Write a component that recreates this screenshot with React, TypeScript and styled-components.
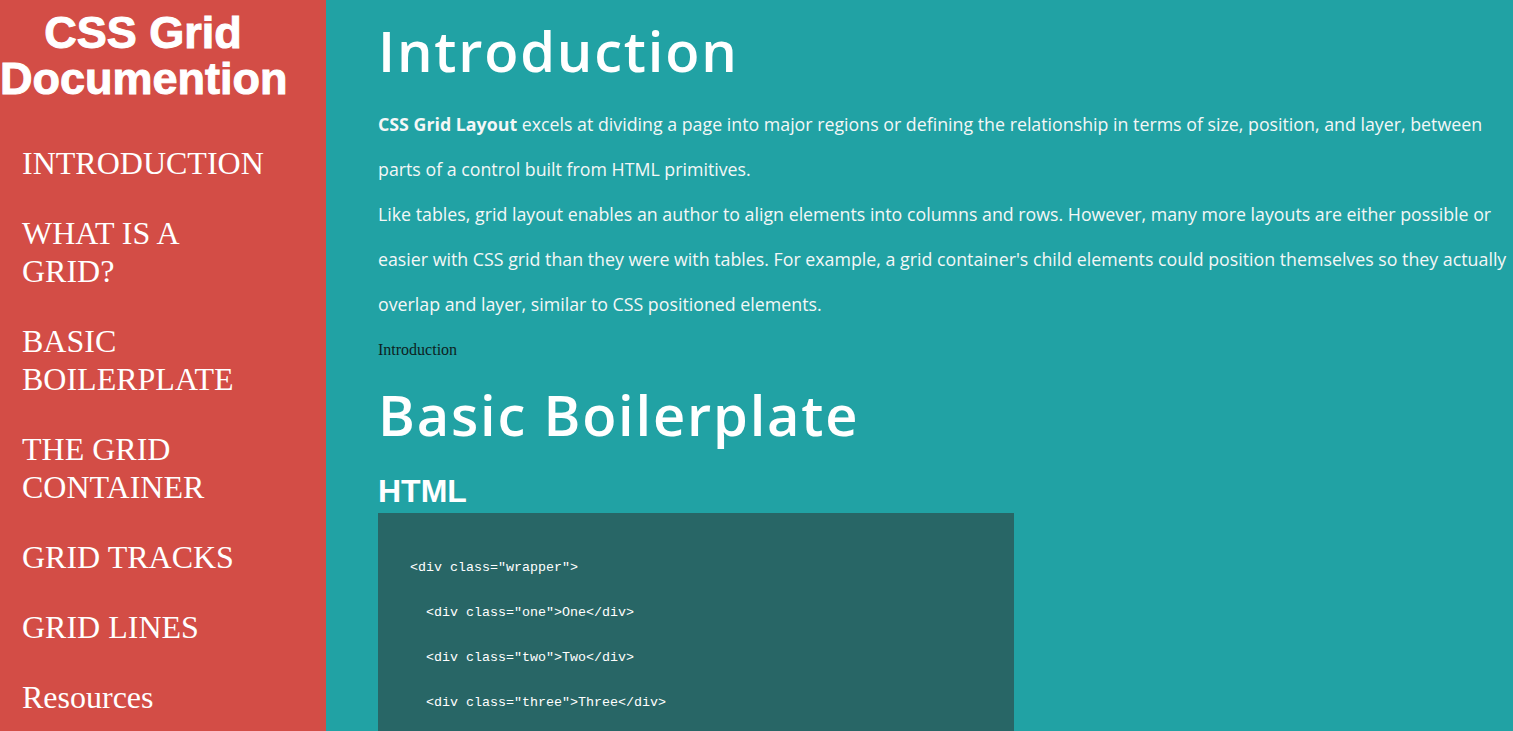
import React from "react";
import styled, { createGlobalStyle } from "styled-components";

const Global = createGlobalStyle`
  html, body { margin: 0; padding: 0; }
  body { font-family: "Liberation Serif", "Times New Roman", serif; overflow: hidden; }
`;

const Page = styled.div`
  display: grid;
  grid-template-columns: 326px 1fr;
  height: 100vh;
  overflow: hidden;
  background: #21a2a4;
`;

const Sidebar = styled.nav`
  background: #d34d46;
  height: 100vh;
  overflow: hidden;
`;

const Title = styled.header`
  width: 286px;
  margin: 10px 0 0;
  text-align: center;
  font-family: "Liberation Sans", Arial, sans-serif;
  font-weight: 700;
  font-size: 45px;
  line-height: 46px;
  color: #fff;
  -webkit-text-stroke: 1px #fff;
`;

const NavList = styled.ul`
  list-style: none;
  margin: 42px 0 0;
  padding: 0 0 0 22px;
  width: 250px;
  display: flex;
  flex-direction: column;
  gap: 32px;
`;

const NavItem = styled.li<{ $upper?: boolean }>`
  font-family: "Liberation Serif", "Times New Roman", serif;
  font-size: 32px;
  line-height: 38px;
  color: #fff;
  text-transform: ${(p) => (p.$upper ? "uppercase" : "none")};
`;

const Main = styled.main`
  padding: 0 0 0 52px;
  overflow: hidden;
`;

const Heading = styled.h1<{ $flush?: boolean }>`
  margin: ${(p) => (p.$flush ? "0" : "12px 0 14px")};
  font-family: "Open Sans", sans-serif;
  font-weight: 600;
  font-size: 56px;
  letter-spacing: 1.8px;
  line-height: 76px;
  color: #fff;
`;

const Text = styled.p`
  margin: 0;
  width: 1135px;
  font-family: "Open Sans", sans-serif;
  font-size: 17.8px;
  line-height: 45px;
  color: #f4f7f7;
  b { font-weight: 700; }
`;

const Plain = styled.div<{ $top?: number; $bottom?: number }>`
  margin: ${(p) => p.$top ?? 0}px 0 ${(p) => p.$bottom ?? 0}px;
  font-family: "Liberation Serif", "Times New Roman", serif;
  font-size: 16px;
  line-height: 18px;
  color: #0d1f22;
`;

const SubHeading = styled.h2`
  margin: 21px 0 3px;
  font-family: "Liberation Sans", Arial, sans-serif;
  font-weight: 700;
  font-size: 32px;
  line-height: 37px;
  color: #fff;
`;

const Code = styled.pre`
  margin: 0;
  width: 636px;
  box-sizing: border-box;
  padding: 32px 32px 40px;
  background: #286666;
  font-family: "Liberation Mono", "Courier New", monospace;
  font-size: 13.33px;
  line-height: 45px;
  color: #fff;
`;

const navItems = [
  { label: "Introduction", upper: true },
  { label: "What is a grid?", upper: true },
  { label: "Basic Boilerplate", upper: true },
  { label: "The grid container", upper: true },
  { label: "Grid tracks", upper: true },
  { label: "Grid lines", upper: true },
  { label: "Resources", upper: false },
];

const codeText = `<div class="wrapper">
  <div class="one">One</div>
  <div class="two">Two</div>
  <div class="three">Three</div>
  <div class="four">Four</div>
  <div class="five">Five</div>
</div>`;

export default function App() {
  return (
    <>
      <Global />
      <Page>
        <Sidebar>
          <Title>CSS Grid Documention</Title>
          <NavList>
            {navItems.map((n) => (
              <NavItem key={n.label} $upper={n.upper}>
                {n.label}
              </NavItem>
            ))}
          </NavList>
        </Sidebar>
        <Main>
          <Heading>Introduction</Heading>
          <Text>
            <b>CSS Grid Layout</b> excels at dividing a page into major regions or defining the
            relationship in terms of size, position, and layer, between parts of a control built from
            HTML primitives.
          </Text>
          <Text>
            Like tables, grid layout enables an author to align elements into columns and rows.
            However, many more layouts are either possible or easier with CSS grid than they were with
            tables. For example, a grid container's child elements could position themselves so they
            actually overlap and layer, similar to CSS positioned elements.
          </Text>
          <Plain $top={14} $bottom={17}>Introduction</Plain>
          <Heading $flush>Basic Boilerplate</Heading>
          <SubHeading>HTML</SubHeading>
          <Code>{codeText}</Code>
        </Main>
      </Page>
    </>
  );
}
